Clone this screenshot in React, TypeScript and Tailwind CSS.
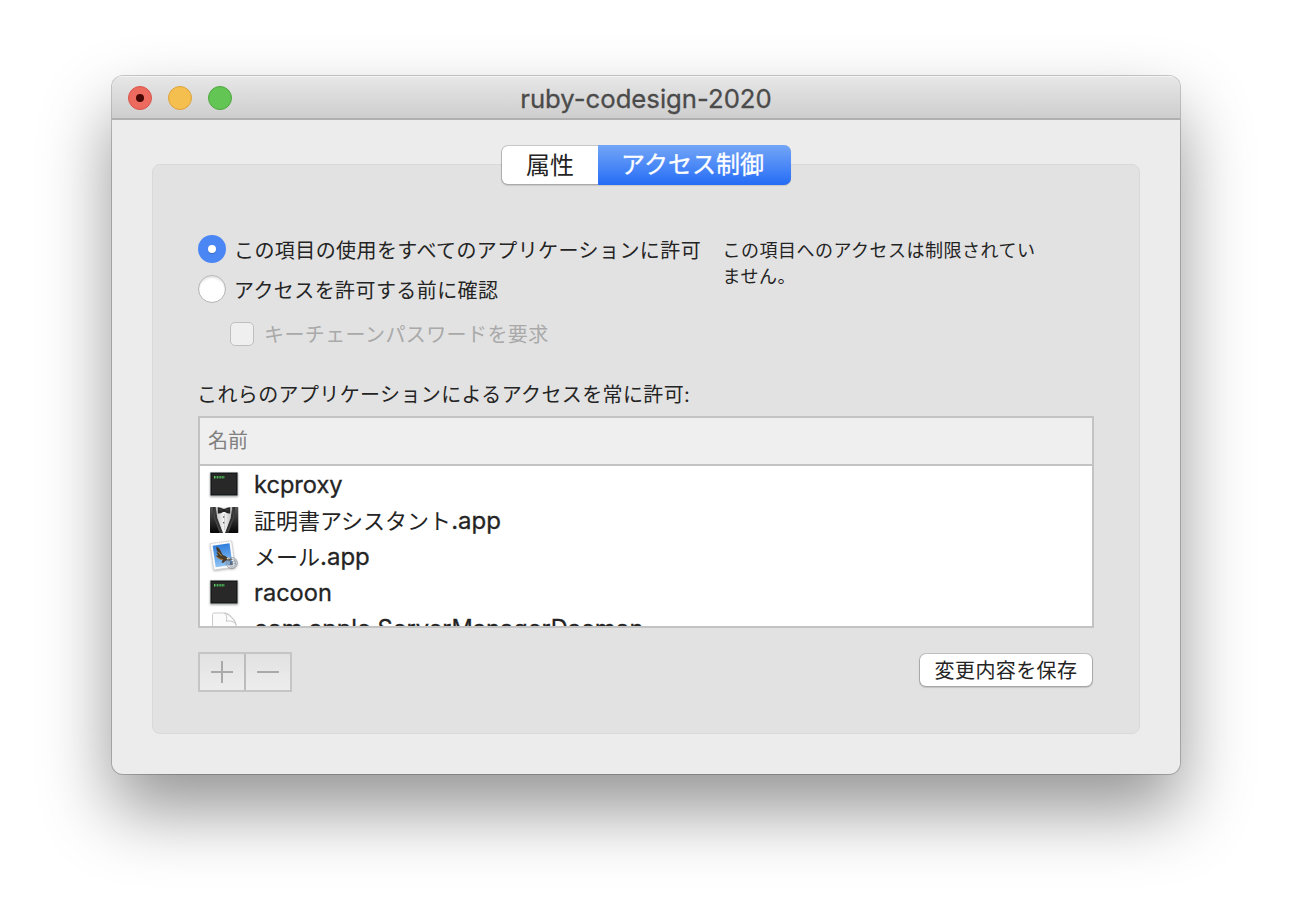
import type { ReactNode } from "react";

const cjk = "font-['Inter','Noto_Sans_CJK_JP',sans-serif]";

function TerminalIcon() {
  return (
    <svg width="32" height="32" viewBox="0 0 32 32" className="drop-shadow-[0_1px_1px_rgba(0,0,0,0.35)]">
      <rect x="2" y="4" width="28" height="24" fill="#c3d0d4" />
      <rect x="2.500" y="4.600" width="27" height="22.900" fill="#0c0c0c" />
      <rect x="3.500" y="5.500" width="25" height="21" fill="#282828" />
      <path d="M6 8.300h2v2H6zM9 8.300h2v2H9zM12 8.300h2v2h-2zM15 8.300h1.800v2H15z" fill="#2d7a35" />
      <path d="M6 8h1.200v2.500H6zM8.700 8h1v2.500h-1zM11.500 8h1v2.500h-1zM14.300 8h1v2.500h-1z" fill="#64c96b" />
    </svg>
  );
}

function TuxedoIcon() {
  return (
    <svg width="32" height="32" viewBox="0 0 32 32">
      <defs>
        <linearGradient id="tux" x1="0" y1="0" x2="0" y2="1">
          <stop offset="0" stopColor="#555" />
          <stop offset="0.55" stopColor="#2b2b2b" />
          <stop offset="1" stopColor="#050505" />
        </linearGradient>
        <linearGradient id="shirt" x1="0" y1="0" x2="1" y2="0">
          <stop offset="0" stopColor="#bdbdbd" />
          <stop offset="0.5" stopColor="#f4f4f4" />
          <stop offset="1" stopColor="#b5b5b5" />
        </linearGradient>
      </defs>
      <rect x="2" y="3" width="28.300" height="26" rx="0.700" fill="url(#tux)" />
      <path d="M7 3h18l-1.500 11L17.500 29h-3L8.500 14Z" fill="url(#shirt)" />
      <path d="M5 3h2.700l1.600 11L14.900 29h-3.400L5.800 13Z" fill="#343434" />
      <path d="M27 3h-2.700l-1.600 11L17.100 29h3.400L26.200 13Z" fill="#303030" />
      <path d="M7.500 3.200 6.300 13 11.600 27M24.500 3.200 25.700 13 20.400 27" fill="none" stroke="#666" strokeWidth="0.500" />
      <path d="M9.800 3.200c1.800 0 3.700.8 5.200 1.600h2c1.500-.8 3.400-1.600 5.200-1.600v6.300c-1.800-.1-3.700-.6-5.200-1.600h-2c-1.500 1-3.400 1.500-5.200 1.600Z" fill="#242424" />
      <path d="M11 5.500l3 .7M21 5.500l-3 .7" stroke="#555" strokeWidth="0.700" />
      <circle cx="15.800" cy="13" r="0.700" fill="#222" />
      <circle cx="15.800" cy="18.700" r="0.700" fill="#222" />
      <path d="M16.500 10v16" stroke="#aaa" strokeWidth="0.500" />
    </svg>
  );
}

function MailIcon() {
  return (
    <svg width="32" height="32" viewBox="0 0 32 32" className="drop-shadow-[0_1px_1px_rgba(0,0,0,0.3)]">
      <defs>
        <linearGradient id="sky" x1="0" y1="0" x2="0" y2="1">
          <stop offset="0" stopColor="#2f7edd" />
          <stop offset="1" stopColor="#8fc3f2" />
        </linearGradient>
      </defs>
      <g transform="rotate(-8 15 16)">
        <rect x="4" y="2" width="21.500" height="26.500" fill="#fbfbfb" stroke="#c4c4c4" strokeWidth="0.700" strokeDasharray="1.500 0.700" />
        <rect x="6.200" y="4.300" width="17" height="21.800" fill="url(#sky)" />
      </g>
      <path d="M8.500 6.500c2.200 1.200 3.900 3.100 4.700 5.500l1.500 3c1.800.4 3.400 1.400 4.700 2.700l5 1.400-2.200 1.700-3.800-.2-3.400 2.300-1.500-.7 1.200-1.800-3.500-1.300-3.500-3.300 2.600-.5-2-2.600 1.500-.4-1.500-3Z" fill="#4a3a28" />
      <path d="M8.300 16.300c1.800 2 4 3 6.500 3.300M10.200 12l3.500 4" fill="none" stroke="#b58a4c" strokeWidth="0.900" />
      <path d="m18.500 18.300 2.400-.8 1.400 1.200-2.600.8Z" fill="#f5e7c4" />
      <circle cx="23.800" cy="23" r="5.600" fill="#8fa1b5" fillOpacity="0.150" stroke="#7c8794" strokeWidth="0.600" />
      <circle cx="23.800" cy="23" r="3.800" fill="none" stroke="#7c8794" strokeWidth="0.500" />
      <path d="M16.500 21.500q2-1 4 0t4 0 4 0M16.500 24q2-1 4 0t4 0 4 0" fill="none" stroke="#84909c" strokeWidth="0.500" />
      <rect x="21.800" y="21.300" width="3" height="4" fill="#46546b" opacity=".75" />
    </svg>
  );
}

function DocumentIcon() {
  return (
    <svg width="32" height="32" viewBox="0 0 32 32">
      <path d="M4.500 32V2.500q0-1.500 1.500-1.500h10.500q3.500 0 6.500 3.300 4.500 4 5 8.200V32Z" fill="#fcfcfc" stroke="#cacaca" />
      <path d="M16.500 1c2 1.200 2.800 4.600 1.900 8.300 4-.9 7.700.1 9.600 3.200-1-4-7-10.500-11.500-11.500Z" fill="#fff" stroke="#c4c4c4" />
    </svg>
  );
}

const rows: { icon: ReactNode; name?: string; latin: string }[] = [
  { icon: <TerminalIcon />, latin: "kcproxy" },
  { icon: <TuxedoIcon />, name: "証明書アシスタント", latin: ".app" },
  { icon: <MailIcon />, name: "メール", latin: ".app" },
  { icon: <TerminalIcon />, latin: "racoon" },
  { icon: <DocumentIcon />, latin: "com.apple.ServerManagerDaemon" },
];

export default function App() {
  return (
    <div className={`h-[922px] w-[1292px] overflow-hidden bg-white pt-[76px] pl-[112px] whitespace-nowrap text-[#242424] ${cjk}`}>
      <div className="flex h-[698px] w-[1068px] flex-col overflow-hidden rounded-[11px] bg-[#ececec] shadow-[0_0_0_1px_rgba(0,0,0,0.2),0_36px_70px_rgba(0,0,0,0.42)]">
        <header className="grid h-[44px] shrink-0 grid-cols-[1fr_auto_1fr] items-center border-b-2 border-[#b0b0b0] bg-linear-to-b from-[#e7e7e7] to-[#cecece] shadow-[inset_0_1px_0_#f4f4f4]">
          <div className="flex gap-4 pl-4">
            <span className="flex size-6 items-center justify-center rounded-full border border-[#d9534b] bg-[#ed6a5e]">
              <span className="size-2 rounded-full bg-[#460804]" />
            </span>
            <span className="size-6 rounded-full border border-[#dca23b] bg-[#f5bf4f]" />
            <span className="size-6 rounded-full border border-[#50a73f] bg-[#62c554]" />
          </div>
          <h1 className="pt-[3px] text-[25.7px] leading-[40px] text-[#4b4b4b] [-webkit-text-stroke:0.3px_#4b4b4b]">ruby-codesign-2020</h1>
        </header>

        <main className="flex flex-1 flex-col px-10 pt-[44px] pb-10">
          <section className="flex h-[570px] flex-col rounded-lg border border-[#d9d9d9] bg-[#e2e2e2] px-[45px]">
            <div className="-mt-[19px] flex h-[38px] w-[288px] shrink-0 self-center rounded-[6px] bg-white text-[24px] leading-[37px] shadow-[0_0_0_1px_rgba(0,0,0,0.14),0_1px_1px_1px_rgba(0,0,0,0.12)]">
              <button className="w-[96px] shrink-0 text-center">属性</button>
              <button className="-mt-px h-10 w-[193px] shrink-0 rounded-r-[7px] bg-linear-to-b from-[#73a5f6] to-[#246bf6] pr-1 text-center leading-[38px] text-white [-webkit-text-stroke:0.3px_white]">アクセス制御</button>
            </div>

            <div className="mt-[49px] flex h-[114px] shrink-0 justify-between">
              <div className="w-[525px] text-[20px] leading-8 tracking-[0.35px]">
                <label className="flex h-8 items-center gap-2">
                  <span className="flex size-7 items-center justify-center rounded-full bg-[#4a86f4]">
                    <span className="size-2 rounded-full bg-white shadow-[0_1px_1px_rgba(0,0,0,0.2)]" />
                  </span>
                  <span className="pt-[4px] tracking-[0.42px]">この項目の使用をすべてのアプリケーションに許可</span>
                </label>
                <label className="mt-2 flex h-8 items-center gap-2">
                  <span className="size-7 rounded-full border border-[#b4b4b4] bg-white shadow-[inset_0_2px_2px_rgba(0,0,0,0.1)]" />
                  <span className="pt-[4px] tracking-[0.42px]">アクセスを許可する前に確認</span>
                </label>
                <label className="mt-[13px] ml-8 flex h-8 items-center gap-[10px] text-[#a9a9a9]">
                  <span className="size-6 rounded-[5px] border border-[#bfbfbf] bg-[#efefef]" />
                  <span className="pt-[2px] tracking-[0.4px]">キーチェーンパスワードを要求</span>
                </label>
              </div>
              <p className="mt-[5px] w-[372px] text-[18px] leading-[26px] tracking-[0.5px]">
                この項目へのアクセスは制限されてい
                <br />
                ません。
              </p>
            </div>

            <p className="mt-[32px] -ml-px h-8 shrink-0 text-[20px] leading-8 tracking-[0.38px]">これらのアプリケーションによるアクセスを常に許可:</p>

            <div className="mt-[5px] h-[212px] w-[896px] shrink-0 overflow-hidden border-2 border-[#c3c3c3] bg-white">
              <div className="h-[48px] border-b-2 border-[#c3c3c3] bg-[#efefef] pl-2 text-[20px] leading-[46px] text-[#808080]">名前</div>
              <ul>
                {rows.map((row, i) => (
                  <li key={i} className="flex h-9 items-center gap-[14px] pl-2 text-[22px] leading-9">
                    {row.icon}
                    <span className="h-9 pt-px">
                      {row.name}
                      <span className={row.name ? "text-[24px] [-webkit-text-stroke:0.3px_#242424]" : "text-[23.6px] [-webkit-text-stroke:0.3px_#242424]"}>{row.latin}</span>
                    </span>
                  </li>
                ))}
              </ul>
            </div>

            <div className="mt-6 flex h-10 shrink-0 items-start justify-between">
              <div className="flex h-10 w-[94px] border-2 border-[#c5c5c5] bg-linear-to-b from-[#e2e2e2] to-[#ededed]">
                <button className="flex w-[46px] items-center justify-center border-r-2 border-[#bcbcbc]">
                  <svg width="22" height="22" viewBox="0 0 22 22" stroke="#a9a9a9" strokeWidth="2"><path d="M0 11h22M11 0v22" /></svg>
                </button>
                <button className="flex flex-1 items-center justify-center">
                  <svg width="22" height="22" viewBox="0 0 22 22" stroke="#a9a9a9" strokeWidth="2"><path d="M0 11h22" /></svg>
                </button>
              </div>
              <button className="mt-[2px] mr-[2px] h-8 w-[172px] rounded-[6px] bg-white text-[20px] leading-[34px] tracking-[0.4px] shadow-[0_0_0_1px_rgba(0,0,0,0.14),0_1px_1px_1px_rgba(0,0,0,0.14)]">変更内容を保存</button>
            </div>
          </section>
        </main>
      </div>
    </div>
  );
}
